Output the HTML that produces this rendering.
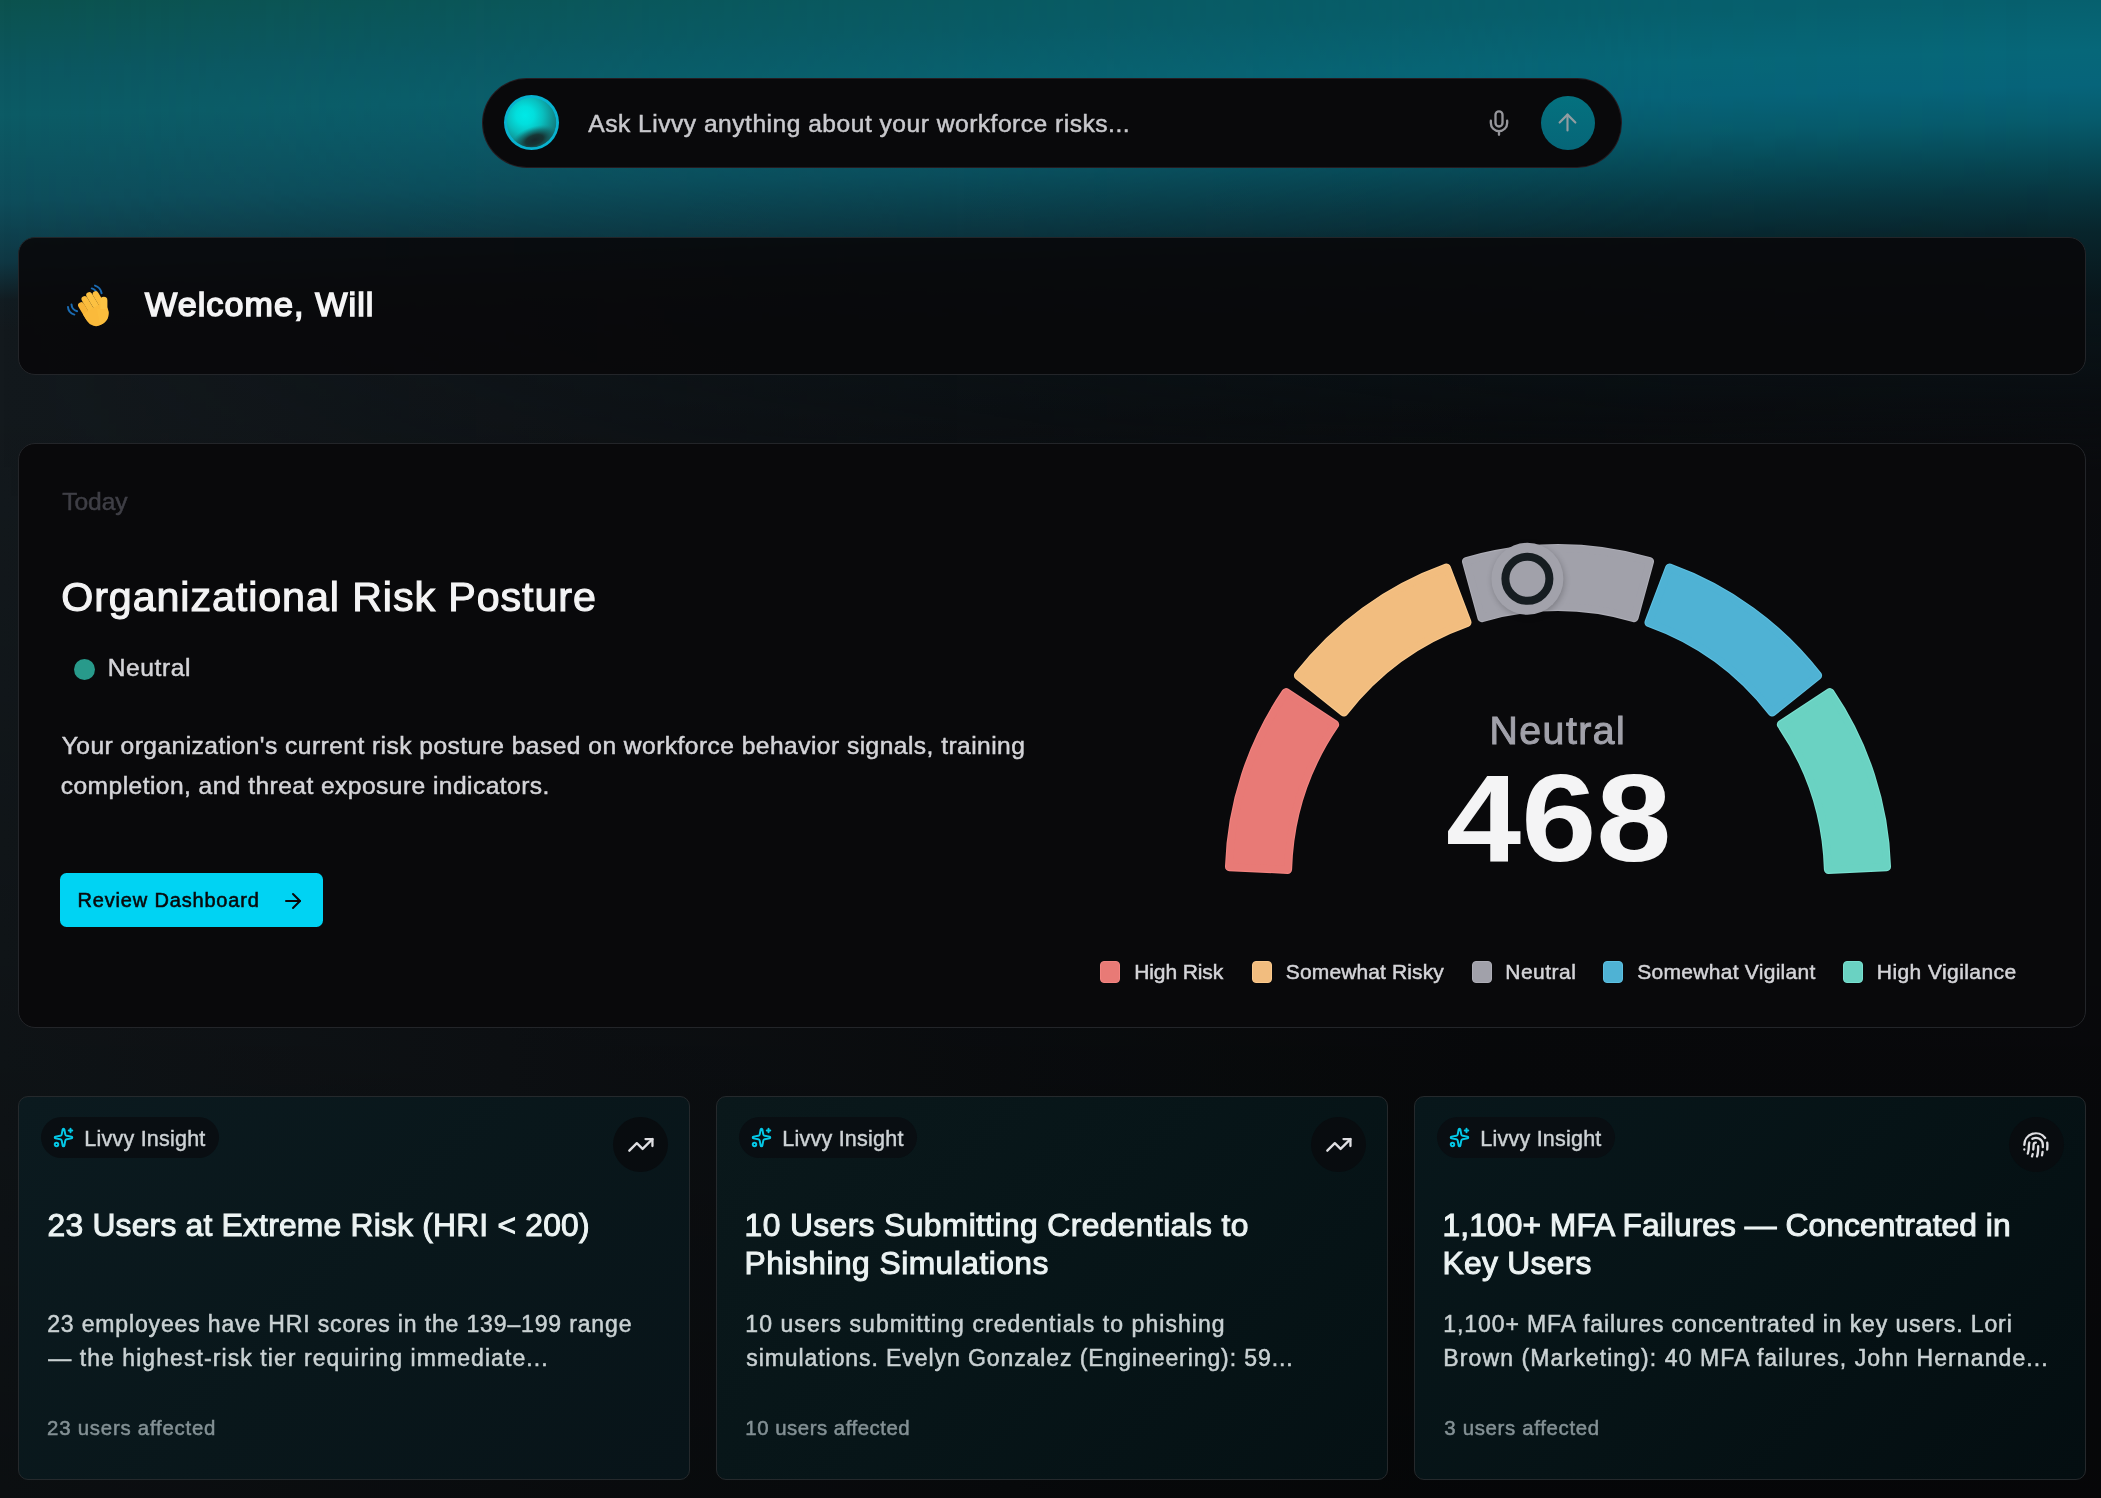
<!DOCTYPE html>
<html lang="en"><head><meta charset="utf-8"><title>Livvy Dashboard</title>
<style>
html,body{margin:0;padding:0}
body{width:2101px;height:1498px;overflow:hidden;position:relative;background:#0b0d10;font-family:"Liberation Sans",sans-serif;color:#f4f4f5}
div,svg{position:absolute;box-sizing:border-box}
.t{white-space:nowrap;margin:0;padding:0}
.bg0{left:0;top:0;width:2101px;height:1498px;background:linear-gradient(180deg,rgba(0,0,0,0) 380px,rgba(0,0,0,.42) 1498px),linear-gradient(90deg,#13191d 0%,#101418 24%,#0c0f12 48%,#090b0d 71%,#0a0b0e 100%)}
.glowL{left:0;top:0;width:2101px;height:470px;background:linear-gradient(178.5deg,#0c524e 0px,#0c5760 70px,#0c5b65 115px,#0e4d5b 200px,#0f3743 262px,rgba(17,30,36,.6) 300px,rgba(18,26,30,0) 330px)}
.glowR{left:0;top:0;width:2101px;height:540px;background:linear-gradient(178.5deg,#06606e 55px,#066779 105px,#06647a 140px,#065b6c 175px,#064956 211px,#07343e 251px,#08252c 286px,rgba(9,22,27,.95) 355px,rgba(9,14,18,.6) 455px,rgba(9,12,15,0) 525px);-webkit-mask-image:linear-gradient(90deg,rgba(0,0,0,0) 0%,rgba(0,0,0,.55) 50%,rgba(0,0,0,.92) 80%,#000 100%);mask-image:linear-gradient(90deg,rgba(0,0,0,0) 0%,rgba(0,0,0,.55) 50%,rgba(0,0,0,.92) 80%,#000 100%)}
.card{background:rgba(9,9,11,.92);border:1.5px solid #232529;border-radius:17px}
.pill{left:481.5px;top:78px;width:1140px;height:90px;border-radius:45px;background:#09090b;border:1.5px solid rgba(40,30,34,.9)}
.send{left:1540.7px;top:96px;width:54px;height:54px;border-radius:50%;background:linear-gradient(180deg,#04717f,#066678)}
.dot{left:74px;top:659.2px;width:21px;height:21px;border-radius:50%;background:#289a8b}
.btn{left:60.3px;top:873px;width:262.3px;height:54.2px;border-radius:6.5px;background:#00d3f3}
.sq{width:20.2px;height:21.9px;top:960.7px;border-radius:4px;border:1.4px solid}
.ic{top:1095.5px;width:671.8px;height:384.5px;border:1.5px solid #25292c;border-radius:10px}
.badge{top:1116.8px;width:178.3px;height:41px;border-radius:20.5px;background:#090e12}
.circ{top:1117.1px;width:55px;height:55px;border-radius:50%;background:#080c0f}
</style></head><body>
<div class="bg0"></div><div class="glowL"></div><div class="glowR"></div>
<div class="pill"></div>
<svg style="left:501px;top:92px" width="61" height="61" viewBox="0 0 61 61">
<defs><radialGradient id="o1" cx=".37" cy=".36" r=".72"><stop offset="0" stop-color="#00e9e7"/><stop offset=".25" stop-color="#02dfdd"/><stop offset=".5" stop-color="#09bfbf"/><stop offset=".75" stop-color="#0f9596"/><stop offset="1" stop-color="#137072"/></radialGradient>
<radialGradient id="o2"><stop offset="0" stop-color="#17272a"/><stop offset=".35" stop-color="#17302f" stop-opacity=".95"/><stop offset=".7" stop-color="#155a5b" stop-opacity=".55"/><stop offset="1" stop-color="#12898a" stop-opacity="0"/></radialGradient>
<clipPath id="oc"><circle cx="30.500" cy="30.500" r="24.800"/></clipPath></defs>
<circle cx="30.500" cy="30.500" r="27.500" fill="#08b3d0"/>
<g clip-path="url(#oc)"><circle cx="30.500" cy="30.500" r="25" fill="url(#o1)"/>
<ellipse cx="33.500" cy="48" rx="26" ry="13.500" transform="rotate(-19 33.500 48)" fill="url(#o2)"/></g>
</svg>
<svg style="left:1485.2px;top:108.85px" width="28" height="28" viewBox="0 0 24 24" fill="none" stroke="#96969b" stroke-width="2" stroke-linecap="round" stroke-linejoin="round"><path d="M12 19v3"/><path d="M19 10v2a7 7 0 0 1-14 0v-2"/><rect x="9" y="2" width="6" height="13" rx="3"/></svg>
<div class="send"></div>
<svg style="left:1553.5px;top:109px" width="27" height="27" viewBox="0 0 24 24" fill="none" stroke="#929da1" stroke-width="1.9" stroke-linecap="round" stroke-linejoin="round"><path d="m5 12 7-7 7 7"/><path d="M12 19V5"/></svg>
<div class="card" style="left:17.75px;top:236.5px;width:2068.45px;height:138.8px"></div>
<div class="card" style="left:17.75px;top:443.4px;width:2068.45px;height:584.2px;background:rgba(9,9,11,.97)"></div>
<svg style="left:60px;top:276px" width="60" height="60" viewBox="0 0 60 60">
<g fill="none" stroke="#1b6cb3" stroke-width="2" stroke-linecap="round"><path d="M35 9.600c3.300.9 5.800 3.600 6.600 7.600"/><path d="M31.800 12.400c2.800.8 4.800 3 5.500 6.600"/><path d="M8 31c.2 3.600 2.600 6.600 6.400 7.600"/><path d="M11.500 28.500c.2 3.200 2.200 5.800 5.600 6.800"/></g>
<g transform="translate(34.800 34.500) rotate(-31)">
<rect x="-12.100" y="-14.500" width="6.300" height="20" rx="3.100" fill="#f8b436"/>
<rect x="-6" y="-18" width="6.200" height="22" rx="3.100" fill="#fbbd3d"/>
<rect x=".1" y="-19" width="6.200" height="22" rx="3.100" fill="#fcc142"/>
<rect x="6.200" y="-16.500" width="6" height="20" rx="3" fill="#fbbd3d"/>
<path d="M-12.100-3h24.300v6.500a12 12 0 0 1-12 12h-1.800a10.500 10.500 0 0 1-10.500-10.500z" fill="#faba3b"/>
</g>
<rect x="40.200" y="20.800" width="7.200" height="24" rx="3.600" fill="#fcc444"/>
<path d="M37 33h10.400v6.500c0 4-3 8-7.500 9.500z" fill="#fbbd3d"/>
</svg>
<div class="dot"></div><div class="btn"></div>
<svg style="left:281.2px;top:888.7px" width="24" height="24" viewBox="0 0 24 24" fill="none" stroke="#09090b" stroke-width="2" stroke-linecap="round" stroke-linejoin="round"><path d="M5 12h14"/><path d="m12 5 7 7-7 7"/></svg>
<div class="sq" style="left:1100px;background:#e87a76;border-color:#f38481"></div><div class="sq" style="left:1251.8px;background:#f2bd7f;border-color:#fbc98c"></div><div class="sq" style="left:1471.6px;background:#a1a1aa;border-color:#adadb6"></div><div class="sq" style="left:1603.1px;background:#4fb2d4;border-color:#5dc0e2"></div><div class="sq" style="left:1842.6px;background:#6ad2c2;border-color:#79e0d0"></div>
<svg style="left:0;top:0" width="2101" height="1498" viewBox="0 0 2101 1498">
<defs><filter id="ks" x="-30%" y="-30%" width="160%" height="160%"><feGaussianBlur stdDeviation="3"/></filter></defs>
<path d="M1229.47 866.68 A328.70 328.70 0 0 1 1286.03 692.61 L1334.67 724.58 A270.50 270.50 0 0 0 1287.61 869.40 Z" fill="#f38481" stroke="#f38481" stroke-width="9.0" stroke-linejoin="round"/>
<path d="M1229.47 866.68 A328.70 328.70 0 0 1 1286.03 692.61 L1334.67 724.58 A270.50 270.50 0 0 0 1287.61 869.40 Z" fill="#e87a76" stroke="#e87a76" stroke-width="6.8" stroke-linejoin="round"/>
<path d="M1298.40 675.58 A328.70 328.70 0 0 1 1446.47 568.00 L1467.02 622.46 A270.50 270.50 0 0 0 1343.84 711.96 Z" fill="#fbc98c" stroke="#fbc98c" stroke-width="9.0" stroke-linejoin="round"/>
<path d="M1298.40 675.58 A328.70 328.70 0 0 1 1446.47 568.00 L1467.02 622.46 A270.50 270.50 0 0 0 1343.84 711.96 Z" fill="#f2bd7f" stroke="#f2bd7f" stroke-width="6.8" stroke-linejoin="round"/>
<path d="M1466.49 561.50 A328.70 328.70 0 0 1 1649.51 561.50 L1634.13 617.63 A270.50 270.50 0 0 0 1481.87 617.63 Z" fill="#adadb6" stroke="#adadb6" stroke-width="9.0" stroke-linejoin="round"/>
<path d="M1466.49 561.50 A328.70 328.70 0 0 1 1649.51 561.50 L1634.13 617.63 A270.50 270.50 0 0 0 1481.87 617.63 Z" fill="#a1a1aa" stroke="#a1a1aa" stroke-width="6.8" stroke-linejoin="round"/>
<path d="M1669.53 568.00 A328.70 328.70 0 0 1 1817.60 675.58 L1772.16 711.96 A270.50 270.50 0 0 0 1648.98 622.46 Z" fill="#5dc0e2" stroke="#5dc0e2" stroke-width="9.0" stroke-linejoin="round"/>
<path d="M1669.53 568.00 A328.70 328.70 0 0 1 1817.60 675.58 L1772.16 711.96 A270.50 270.50 0 0 0 1648.98 622.46 Z" fill="#4fb2d4" stroke="#4fb2d4" stroke-width="6.8" stroke-linejoin="round"/>
<path d="M1829.97 692.61 A328.70 328.70 0 0 1 1886.53 866.68 L1828.39 869.40 A270.50 270.50 0 0 0 1781.33 724.58 Z" fill="#79e0d0" stroke="#79e0d0" stroke-width="9.0" stroke-linejoin="round"/>
<path d="M1829.97 692.61 A328.70 328.70 0 0 1 1886.53 866.68 L1828.39 869.40 A270.50 270.50 0 0 0 1781.33 724.58 Z" fill="#6ad2c2" stroke="#6ad2c2" stroke-width="6.8" stroke-linejoin="round"/>
<circle cx="1528.5" cy="580.8" r="36" fill="#000" opacity=".22" filter="url(#ks)"/>
<circle cx="1527.4" cy="578.8" r="36" fill="#a2a2ab"/>
<circle cx="1527.4" cy="578.8" r="22" fill="#a1a1aa" stroke="#161d21" stroke-width="8"/>
</svg>
<div class="ic" style="left:17.75px;background:linear-gradient(135deg,#0b1a1f 0%,#09171b 50%,#081419 100%)"></div>
<div class="badge" style="left:40.5px"></div>
<svg style="left:53px;top:1126.5px" width="21" height="21" viewBox="0 0 24 24" fill="none" stroke="#04c8e6" stroke-width="2.25" stroke-linecap="round" stroke-linejoin="round"><path d="M11.017 2.814a1 1 0 0 1 1.966 0l1.051 5.558a2 2 0 0 0 1.594 1.594l5.558 1.051a1 1 0 0 1 0 1.966l-5.558 1.051a2 2 0 0 0-1.594 1.594l-1.051 5.558a1 1 0 0 1-1.966 0l-1.051-5.558a2 2 0 0 0-1.594-1.594l-5.558-1.051a1 1 0 0 1 0-1.966l5.558-1.051a2 2 0 0 0 1.594-1.594z"/><path d="M20 2v4"/><path d="M22 4h-4"/><circle cx="4" cy="20" r="2"/></svg>
<div class="circ" style="left:613.1px"></div>
<svg style="left:626.95px;top:1130.9px" width="27.750" height="27.750" viewBox="0 0 24 24" fill="none" stroke="#dfdfe2" stroke-width="2" stroke-linecap="round" stroke-linejoin="round"><path d="M16 7h6v6"/><path d="m22 7-8.500 8.500-5-5L2 17"/></svg>
<div class="ic" style="left:716.25px;background:linear-gradient(135deg,#0a181b 0%,#071518 50%,#051114 100%)"></div>
<div class="badge" style="left:738.5px"></div>
<svg style="left:751px;top:1126.5px" width="21" height="21" viewBox="0 0 24 24" fill="none" stroke="#04c8e6" stroke-width="2.25" stroke-linecap="round" stroke-linejoin="round"><path d="M11.017 2.814a1 1 0 0 1 1.966 0l1.051 5.558a2 2 0 0 0 1.594 1.594l5.558 1.051a1 1 0 0 1 0 1.966l-5.558 1.051a2 2 0 0 0-1.594 1.594l-1.051 5.558a1 1 0 0 1-1.966 0l-1.051-5.558a2 2 0 0 0-1.594-1.594l-5.558-1.051a1 1 0 0 1 0-1.966l5.558-1.051a2 2 0 0 0 1.594-1.594z"/><path d="M20 2v4"/><path d="M22 4h-4"/><circle cx="4" cy="20" r="2"/></svg>
<div class="circ" style="left:1311.1px"></div>
<svg style="left:1324.95px;top:1130.9px" width="27.750" height="27.750" viewBox="0 0 24 24" fill="none" stroke="#dfdfe2" stroke-width="2" stroke-linecap="round" stroke-linejoin="round"><path d="M16 7h6v6"/><path d="m22 7-8.500 8.500-5-5L2 17"/></svg>
<div class="ic" style="left:1414.3px;background:linear-gradient(135deg,#08171b 0%,#061316 50%,#040e11 100%)"></div>
<div class="badge" style="left:1436.5px"></div>
<svg style="left:1449px;top:1126.5px" width="21" height="21" viewBox="0 0 24 24" fill="none" stroke="#04c8e6" stroke-width="2.25" stroke-linecap="round" stroke-linejoin="round"><path d="M11.017 2.814a1 1 0 0 1 1.966 0l1.051 5.558a2 2 0 0 0 1.594 1.594l5.558 1.051a1 1 0 0 1 0 1.966l-5.558 1.051a2 2 0 0 0-1.594 1.594l-1.051 5.558a1 1 0 0 1-1.966 0l-1.051-5.558a2 2 0 0 0-1.594-1.594l-5.558-1.051a1 1 0 0 1 0-1.966l5.558-1.051a2 2 0 0 0 1.594-1.594z"/><path d="M20 2v4"/><path d="M22 4h-4"/><circle cx="4" cy="20" r="2"/></svg>
<div class="circ" style="left:2009.1px"></div>
<svg style="left:2022.15px;top:1131.0px" width="27.750" height="27.750" viewBox="0 0 24 24" fill="none" stroke="#dfdfe2" stroke-width="2" stroke-linecap="round" stroke-linejoin="round"><path d="M12 10a2 2 0 0 0-2 2c0 1.020-.1 2.510-.26 4"/><path d="M14 13.120c0 2.380 0 6.380-1 8.880"/><path d="M17.290 21.020c.12-.6.430-2.300.5-3.020"/><path d="M2 12a10 10 0 0 1 18-6"/><path d="M2 16h.01"/><path d="M21.800 16c.2-2 .131-5.354 0-6"/><path d="M5 19.500C5.500 18 6 15 6 12a6 6 0 0 1 .34-2"/><path d="M8.650 22c.21-.66.450-1.320.57-2"/><path d="M9 6.800a6 6 0 0 1 9 5.200v2"/></svg>
<div id="txt" style="left:0;top:0;width:2101px;height:1498px;will-change:transform"><div class="t" id="ph" style="left:588.25px;top:112px;font-size:24.6px;line-height:24.6px;color:#c9c9cd;letter-spacing:0.496px;-webkit-text-stroke:0.5px #c9c9cd;">Ask Livvy anything about your workforce risks...</div>
<div class="t" id="wel" style="left:145.00px;top:287px;font-size:34.1px;line-height:34.1px;color:#f4f4f5;letter-spacing:1.096px;-webkit-text-stroke:1.6px #f4f4f5;">Welcome, Will</div>
<div class="t" id="today" style="left:62.25px;top:490px;font-size:24.6px;line-height:24.6px;color:#3f3f46;letter-spacing:-0.082px;-webkit-text-stroke:0.5px #3f3f46;">Today</div>
<div class="t" id="h1" style="left:61.25px;top:577px;font-size:41.2px;line-height:41.2px;color:#f4f4f5;letter-spacing:0.927px;-webkit-text-stroke:1.1px #f4f4f5;">Organizational Risk Posture</div>
<div class="t" id="st" style="left:107.75px;top:656px;font-size:24.6px;line-height:24.6px;color:#d4d4d8;letter-spacing:0.564px;-webkit-text-stroke:0.5px #d4d4d8;">Neutral</div>
<div class="t" id="p1" style="left:61.75px;top:734px;font-size:24.6px;line-height:24.6px;color:#d4d4d8;letter-spacing:0.447px;-webkit-text-stroke:0.5px #d4d4d8;">Your organization&#x27;s current risk posture based on workforce behavior signals, training</div>
<div class="t" id="p2" style="left:60.75px;top:774px;font-size:24.6px;line-height:24.6px;color:#d4d4d8;letter-spacing:0.437px;-webkit-text-stroke:0.5px #d4d4d8;">completion, and threat exposure indicators.</div>
<div class="t" id="btn" style="left:77.58px;top:890px;font-size:20.0px;line-height:20.0px;color:#09090b;letter-spacing:0.820px;-webkit-text-stroke:0.55px #09090b;">Review Dashboard</div>
<div class="t" id="gl" style="left:1489.50px;top:711px;font-size:39.2px;line-height:39.2px;color:#a1a1aa;letter-spacing:1.497px;-webkit-text-stroke:1.0px #a1a1aa;">Neutral</div>
<div class="t" id="gv" style="left:1446.31px;top:756px;font-size:124.4px;line-height:124.4px;color:#f4f4f5;letter-spacing:0.000px;font-weight:700;transform:scaleX(1.0862);transform-origin:0 0;">468</div>
<div class="t" id="l1" style="left:1134.25px;top:961px;font-size:21.0px;line-height:21.0px;color:#d4d4d8;letter-spacing:-0.107px;-webkit-text-stroke:0.5px #d4d4d8;">High Risk</div>
<div class="t" id="l2" style="left:1285.85px;top:961px;font-size:21.0px;line-height:21.0px;color:#d4d4d8;letter-spacing:0.124px;-webkit-text-stroke:0.5px #d4d4d8;">Somewhat Risky</div>
<div class="t" id="l3" style="left:1505.25px;top:961px;font-size:21.0px;line-height:21.0px;color:#d4d4d8;letter-spacing:0.495px;-webkit-text-stroke:0.5px #d4d4d8;">Neutral</div>
<div class="t" id="l4" style="left:1637.35px;top:961px;font-size:21.0px;line-height:21.0px;color:#d4d4d8;letter-spacing:0.274px;-webkit-text-stroke:0.5px #d4d4d8;">Somewhat Vigilant</div>
<div class="t" id="l5" style="left:1876.85px;top:961px;font-size:21.0px;line-height:21.0px;color:#d4d4d8;letter-spacing:0.416px;-webkit-text-stroke:0.5px #d4d4d8;">High Vigilance</div>
<div class="t" id="b1" style="left:84.32px;top:1129px;font-size:21.5px;line-height:21.5px;color:#cdd2d5;letter-spacing:0.227px;-webkit-text-stroke:0.45px #cdd2d5;">Livvy Insight</div>
<div class="t" id="b2" style="left:782.33px;top:1129px;font-size:21.5px;line-height:21.5px;color:#cdd2d5;letter-spacing:0.227px;-webkit-text-stroke:0.45px #cdd2d5;">Livvy Insight</div>
<div class="t" id="b3" style="left:1480.32px;top:1129px;font-size:21.5px;line-height:21.5px;color:#cdd2d5;letter-spacing:0.227px;-webkit-text-stroke:0.45px #cdd2d5;">Livvy Insight</div>
<div class="t" id="t1a" style="left:47.60px;top:1210px;font-size:31.8px;line-height:31.8px;color:#ecf3f3;letter-spacing:0.213px;-webkit-text-stroke:1.0px #ecf3f3;">23 Users at Extreme Risk (HRI &lt; 200)</div>
<div class="t" id="t2a" style="left:744.60px;top:1210px;font-size:31.8px;line-height:31.8px;color:#ecf3f3;letter-spacing:0.381px;-webkit-text-stroke:1.0px #ecf3f3;">10 Users Submitting Credentials to</div>
<div class="t" id="t2b" style="left:744.60px;top:1248px;font-size:31.8px;line-height:31.8px;color:#ecf3f3;letter-spacing:0.455px;-webkit-text-stroke:1.0px #ecf3f3;">Phishing Simulations</div>
<div class="t" id="t3a" style="left:1442.60px;top:1210px;font-size:31.8px;line-height:31.8px;color:#ecf3f3;letter-spacing:0.044px;-webkit-text-stroke:1.0px #ecf3f3;">1,100+ MFA Failures — Concentrated in</div>
<div class="t" id="t3b" style="left:1442.60px;top:1248px;font-size:31.8px;line-height:31.8px;color:#ecf3f3;letter-spacing:0.280px;-webkit-text-stroke:1.0px #ecf3f3;">Key Users</div>
<div class="t" id="d1a" style="left:47.15px;top:1313px;font-size:23.0px;line-height:23.0px;color:#c9d1d3;letter-spacing:0.852px;-webkit-text-stroke:0.5px #c9d1d3;">23 employees have HRI scores in the 139–199 range</div>
<div class="t" id="d1b" style="left:48.15px;top:1347px;font-size:23.0px;line-height:23.0px;color:#c9d1d3;letter-spacing:1.072px;-webkit-text-stroke:0.5px #c9d1d3;">— the highest-risk tier requiring immediate...</div>
<div class="t" id="d2a" style="left:745.35px;top:1313px;font-size:23.0px;line-height:23.0px;color:#c9d1d3;letter-spacing:1.062px;-webkit-text-stroke:0.5px #c9d1d3;">10 users submitting credentials to phishing</div>
<div class="t" id="d2b" style="left:746.35px;top:1347px;font-size:23.0px;line-height:23.0px;color:#c9d1d3;letter-spacing:0.916px;-webkit-text-stroke:0.5px #c9d1d3;">simulations. Evelyn Gonzalez (Engineering): 59...</div>
<div class="t" id="d3a" style="left:1443.35px;top:1313px;font-size:23.0px;line-height:23.0px;color:#c9d1d3;letter-spacing:0.898px;-webkit-text-stroke:0.5px #c9d1d3;">1,100+ MFA failures concentrated in key users. Lori</div>
<div class="t" id="d3b" style="left:1443.35px;top:1347px;font-size:23.0px;line-height:23.0px;color:#c9d1d3;letter-spacing:1.096px;-webkit-text-stroke:0.5px #c9d1d3;">Brown (Marketing): 40 MFA failures, John Hernande...</div>
<div class="t" id="u1" style="left:47.05px;top:1418px;font-size:20.4px;line-height:20.4px;color:#849195;letter-spacing:0.768px;-webkit-text-stroke:0.5px #849195;">23 users affected</div>
<div class="t" id="u2" style="left:745.35px;top:1418px;font-size:20.4px;line-height:20.4px;color:#849195;letter-spacing:0.512px;-webkit-text-stroke:0.5px #849195;">10 users affected</div>
<div class="t" id="u3" style="left:1444.35px;top:1418px;font-size:20.4px;line-height:20.4px;color:#849195;letter-spacing:0.675px;-webkit-text-stroke:0.5px #849195;">3 users affected</div></div></body></html>
